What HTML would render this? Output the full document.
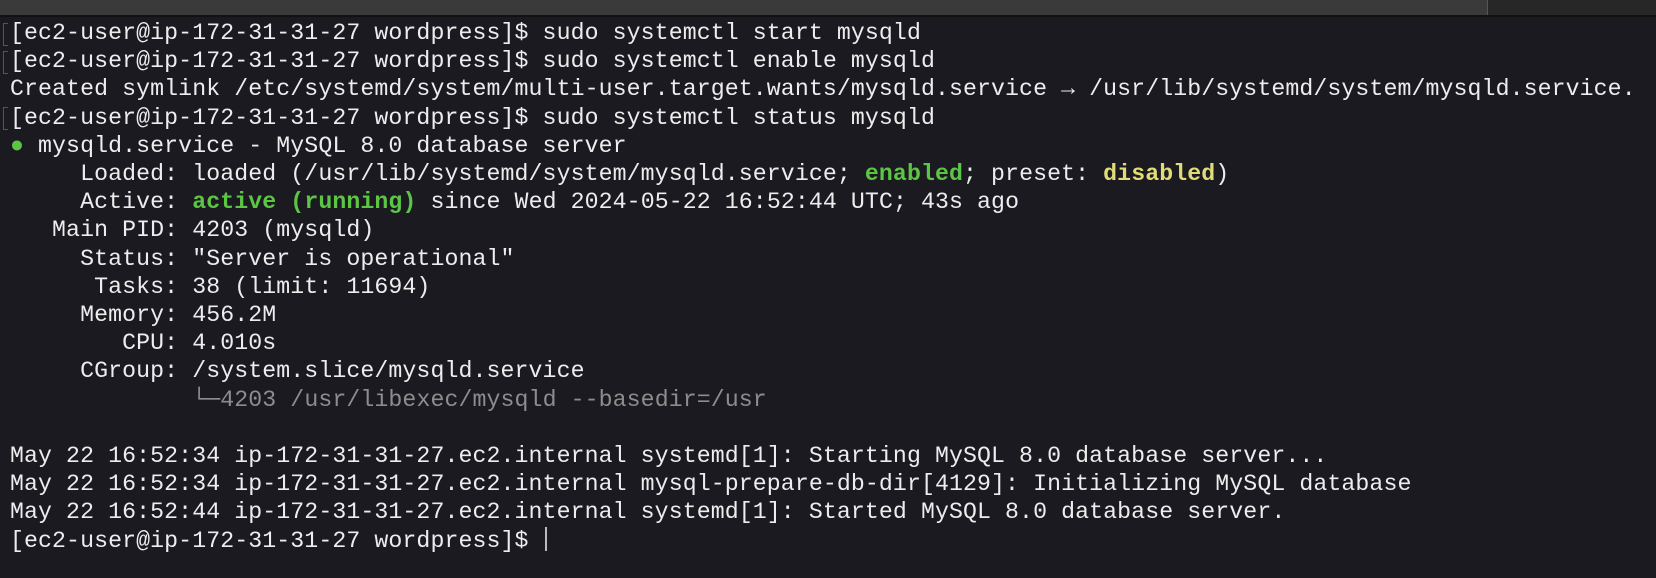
<!DOCTYPE html>
<html><head><meta charset="utf-8"><style>
html,body{margin:0;padding:0;width:1656px;height:578px;overflow:hidden;background:#1b1a21;}
.top{position:absolute;left:0;top:0;width:1656px;height:15px;background:#3a3a3b;border-bottom:2px solid #111;}
.top .r{position:absolute;left:1487px;top:0;width:169px;height:15px;background:#272727;border-left:1px solid #555;}
pre{position:absolute;left:10px;top:19px;margin:0;font-family:"Liberation Mono",monospace;font-size:23.2px;letter-spacing:0.1px;line-height:28.2px;color:#ededed;}
.g{color:#5cc544;font-weight:bold}
.y{color:#e0dc78;font-weight:bold}
.d{color:#8d8d8d}
.dot{color:#5cc544}
.m{position:absolute;left:3px;width:4px;height:21px;border:1px solid #555;border-right:none;}
.cur{display:inline-block;width:2px;height:24px;background:#bbb;vertical-align:-4px;margin-left:2px}
</style></head><body>
<div class="top"><div class="r"></div></div>
<div class="m" style="top:23px"></div><div class="m" style="top:51px"></div><div class="m" style="top:107px"></div>
<pre>[ec2-user@ip-172-31-31-27 wordpress]$ sudo systemctl start mysqld
[ec2-user@ip-172-31-31-27 wordpress]$ sudo systemctl enable mysqld
Created symlink /etc/systemd/system/multi-user.target.wants/mysqld.service → /usr/lib/systemd/system/mysqld.service.
[ec2-user@ip-172-31-31-27 wordpress]$ sudo systemctl status mysqld
<span class="dot">●</span> mysqld.service - MySQL 8.0 database server
     Loaded: loaded (/usr/lib/systemd/system/mysqld.service; <span class="g">enabled</span>; preset: <span class="y">disabled</span>)
     Active: <span class="g">active (running)</span> since Wed 2024-05-22 16:52:44 UTC; 43s ago
   Main PID: 4203 (mysqld)
     Status: "Server is operational"
      Tasks: 38 (limit: 11694)
     Memory: 456.2M
        CPU: 4.010s
     CGroup: /system.slice/mysqld.service
             <span class="d">└─4203 /usr/libexec/mysqld --basedir=/usr</span>

May 22 16:52:34 ip-172-31-31-27.ec2.internal systemd[1]: Starting MySQL 8.0 database server...
May 22 16:52:34 ip-172-31-31-27.ec2.internal mysql-prepare-db-dir[4129]: Initializing MySQL database
May 22 16:52:44 ip-172-31-31-27.ec2.internal systemd[1]: Started MySQL 8.0 database server.
[ec2-user@ip-172-31-31-27 wordpress]$ <span class="cur"></span></pre>
</body></html>
